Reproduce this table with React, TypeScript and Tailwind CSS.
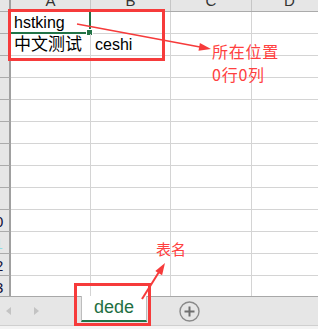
import React from "react";

const rows = Array.from({ length: 13 }, (_, i) => i + 1);

const cellText: Record<number, [React.ReactNode, React.ReactNode]> = {
  1: ["hstking", ""],
  2: [<span className="font-['Noto_Sans_CJK_SC',sans-serif] text-[17px]">中文测试</span>, "ceshi"],
};

function RowHead({ n }: { n: number }) {
  return (
    <div className="flex h-full w-[11px] shrink-0 items-end overflow-hidden border-b border-r-2 border-b-[#ababab] border-r-[#a0a0a0] bg-[#e6e6e6]">
      <div
        className={
          n === 11
            ? "-ml-[20px] w-[30px] shrink-0 pb-[2px] text-center text-[15px] leading-none text-[#8fdde6]"
            : "-ml-[20px] w-[30px] shrink-0 pb-[2px] text-center text-[15px] leading-none text-[#10103a]"
        }
      >
        {n}
      </div>
    </div>
  );
}

function Row({ n }: { n: number }) {
  const [a, b] = cellText[n] ?? ["", ""];
  return (
    <div className="flex h-[22px] shrink-0">
      <RowHead n={n} />
      <div className="relative flex h-full w-[80px] shrink-0 items-end border-b border-r border-[#d4d4d4] pb-[2px] pl-[3px] text-[16px] leading-none text-black">
        <span className="whitespace-nowrap">{a}</span>
        {n === 1 && (
          <>
            <div className="absolute -bottom-[1px] -left-[2px] -right-[1px] -top-[2px] border-2 border-[#217346]" />
            <div className="absolute left-[75px] top-[17px] h-[7px] w-[7px] border border-white bg-[#217346]" />
          </>
        )}
      </div>
      <div className="flex h-full w-[80px] shrink-0 items-end border-b border-r border-[#d4d4d4] pb-[2px] pl-[4px] text-[16px] leading-none text-black">
        <span>{b}</span>
      </div>
      <div className="h-full w-[81px] shrink-0 border-b border-r border-[#d4d4d4]" />
      <div className="h-full flex-1 border-b border-[#d4d4d4]" />
    </div>
  );
}

function ColHead({ label, w }: { label: string; w: string }) {
  return (
    <div className={`flex h-full ${w} shrink-0 items-end justify-center overflow-hidden border-r border-[#c6c6c6] pb-[3px] text-[15px] leading-none text-[#333]`}>
      <span>{label}</span>
    </div>
  );
}

export default function App() {
  return (
    <div className="relative flex h-[329px] w-[318px] flex-col overflow-hidden bg-white font-['Liberation_Sans','Noto_Sans_CJK_SC',sans-serif]">
      {/* sheet */}
      <div className="flex h-[296px] shrink-0 flex-col overflow-hidden">
        <div className="flex h-[12px] shrink-0 border-b border-[#ababab] bg-[#e6e6e6]">
          <div className="h-full w-[11px] shrink-0 border-r-2 border-[#a0a0a0]" />
          <ColHead label="A" w="w-[80px]" />
          <ColHead label="B" w="w-[80px]" />
          <ColHead label="C" w="w-[81px]" />
          <div className="flex h-full flex-1 items-end overflow-hidden pb-[3px] pl-[32px] text-[15px] leading-none text-[#333]">
            <span>D</span>
          </div>
        </div>
        {rows.map((n) => (
          <Row key={n} n={n} />
        ))}
      </div>

      {/* sheet tabs */}
      <div className="flex h-[30px] shrink-0 items-start border-b border-t border-b-[#cfcfcf] border-t-[#a8a8a8] bg-[#e6e6e6]">
        <div className="flex h-full w-[81px] shrink-0 items-center">
          <svg width="40" height="10" viewBox="0 0 40 10" className="ml-[4px]">
            <polygon points="7,1 2,5 7,9" fill="#c3c3c3" />
            <polygon points="30,1 35,5 30,9" fill="#c3c3c3" />
          </svg>
        </div>
        <div className="-mt-[1px] flex h-[26px] w-[66px] shrink-0 items-center justify-center border-x border-b-2 border-x-[#bdbdbd] border-b-[#217346] bg-white pb-[2px] text-[18px] leading-none text-[#1f6f43]">
          dede
        </div>
        <div className="ml-[32px] flex h-full items-center">
          <svg width="21" height="21" viewBox="0 0 21 21">
            <circle cx="10.5" cy="10.5" r="9.5" fill="none" stroke="#8a8a8a" strokeWidth="1.4" />
            <path d="M10.5 5.5v10M5.5 10.5h10" stroke="#6f6f6f" strokeWidth="2" />
          </svg>
        </div>
      </div>
      <div className="flex-1 bg-[#f3f3f3]" />

      {/* annotations */}
      <div className="absolute left-[8px] top-[9px] h-[52px] w-[157px] border-[3px] border-[#f63b3b]" />
      <div className="absolute left-[74px] top-[283px] h-[43px] w-[77px] border-[3px] border-[#f63b3b]" />
      <svg className="pointer-events-none absolute left-0 top-0" width="318" height="329" viewBox="0 0 318 329">
        <line x1="77" y1="24" x2="200" y2="47" stroke="#f63b3b" strokeWidth="1.6" />
        <polygon points="211,49 199.9,42.9 198.5,50.7" fill="#f63b3b" />
        <line x1="142" y1="299" x2="159" y2="272" stroke="#f63b3b" strokeWidth="2" />
        <polygon points="165,263 162.1,275.3 155.3,271.1" fill="#f63b3b" />
      </svg>
      <div className="absolute left-[212px] top-[40px] whitespace-nowrap font-['Noto_Sans_CJK_SC',sans-serif] text-[16px] leading-[23px] tracking-[0.75px] text-[#ff4040]">
        所在位置
        <br />
        0行0列
      </div>
      <div className="absolute left-[156px] top-[241px] whitespace-nowrap font-['Noto_Sans_CJK_SC',sans-serif] text-[15px] leading-none text-[#ff4040]">
        表名
      </div>
    </div>
  );
}
